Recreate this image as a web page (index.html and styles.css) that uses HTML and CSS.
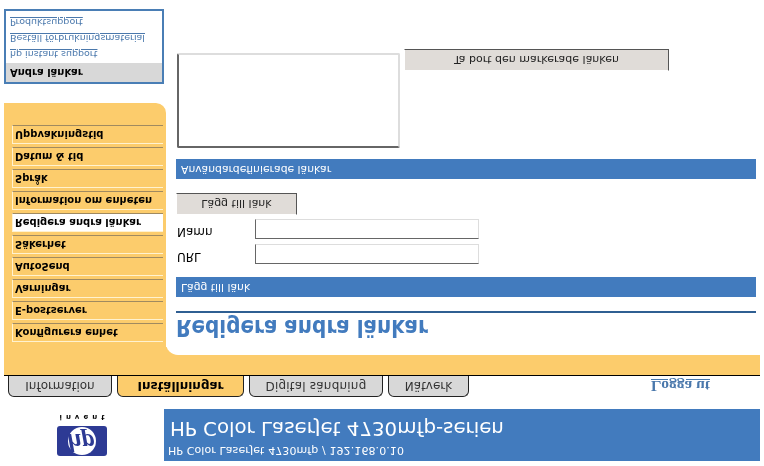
FILE: index.html
```html
<!DOCTYPE html>
<html>
<head>
    <title>Redigera andra länkar</title>
    <link rel="stylesheet" href="styles.css">
</head>
<body>
    <div class="page">
        <div class="top">
            <div class="logo">
                <svg width="50" height="30" viewBox="0 0 50 30">
                    <rect width="50" height="30" rx="3" fill="#2d3a94"/>
                    <circle cx="25" cy="15" r="14" fill="#fff"/>
                    <text x="24" y="22" text-anchor="middle" class="logo-hp">hp</text>
                </svg>
                <div class="invent">invent</div>
            </div>
            <div class="title">
                <div class="title-sub">HP Color LaserJet 4730mfp / 192.168.0.10</div>
                <div class="title-main">HP Color LaserJet 4730mfp-serien</div>
            </div>
        </div>
        <div class="tabs">
            <a class="tab tab-info">Information</a>
            <a class="tab tab-settings active">Inställningar</a>
            <a class="tab tab-digital">Digital sändning</a>
            <a class="tab tab-net">Nätverk</a>
            <a class="logout">Logga ut</a>
        </div>
        <div class="body">
            <div class="side">
                <div class="nav">
                    <a class="nav-item">Konfigurera enhet</a>
                    <a class="nav-item">E-postserver</a>
                    <a class="nav-item">Varningar</a>
                    <a class="nav-item">AutoSend</a>
                    <a class="nav-item">Säkerhet</a>
                    <a class="nav-item active">Redigera andra länkar</a>
                    <a class="nav-item">Information om enheten</a>
                    <a class="nav-item">Språk</a>
                    <a class="nav-item">Datum &amp; tid</a>
                    <a class="nav-item">Uppvakningstid</a>
                </div>
                <div class="links">
                    <div class="links-head">Andra länkar</div>
                    <a class="links-item">hp instant support</a>
                    <a class="links-item">Beställ förbrukningsmaterial</a>
                    <a class="links-item">Produktsupport</a>
                </div>
            </div>
            <div class="content">
                <h1><span>Redigera andra länkar</span></h1>
                <div class="bar">Lägg till länk</div>
                <div class="field"><label>URL</label><input type="text"></div>
                <div class="field"><label>Namn</label><input type="text"></div>
                <button class="btn btn-add">Lägg till länk</button>
                <div class="bar bar-user">Användardefinierade länkar</div>
                <div class="list-row">
                    <select class="list" size="5"></select>
                    <button class="btn btn-remove">Ta bort den markerade länken</button>
                </div>
            </div>
        </div>
    </div>
</body>
</html>
```

FILE: styles.css
```css
html, body {
    margin: 0;
    padding: 0;
    background: #fff;
}
body {
    font-family: "DejaVu Sans", Verdana, sans-serif;
    font-size: 11px;
    color: #000;
    overflow: hidden;
}
/* the whole screen is shown upside down */
.page {
    width: 764px;
    height: 466px;
    padding-top: 5px;
    box-sizing: border-box;
    overflow: hidden;
    transform: scaleY(-1);
}
.top {
    display: flex;
    height: 52px;
}
.logo {
    width: 164px;
    padding-top: 5px;
    display: flex;
    flex-direction: column;
    align-items: center;
}
.logo-hp {
    font-family: "Liberation Serif", serif;
    font-style: italic;
    font-weight: bold;
    font-size: 26px;
    fill: #2d3a94;
}
.invent {
    margin-top: 5px;
    padding-left: 4px;
    font-size: 7px;
    font-weight: bold;
    line-height: 9px;
    letter-spacing: 4px;
}
.title {
    width: 596px;
    background: #427bbe;
    color: #fff;
    padding: 3px 0 0 4px;
    box-sizing: border-box;
}
.title-sub {
    font-size: 11px;
    line-height: 16px;
    letter-spacing: 0.1px;
}
.title-main {
    margin-left: 2px;
    font-size: 19.8px;
    line-height: 28px;
}
.tabs {
    display: flex;
    align-items: flex-end;
    height: 21px;
    margin-top: 12px;
    padding-left: 8px;
    gap: 5px;
}
.tab {
    height: 21px;
    box-sizing: border-box;
    border: 1px solid #222;
    border-bottom: none;
    border-radius: 6px 6px 0 0;
    background: #d8d8d8;
    color: #333;
    text-align: center;
    font-size: 12px;
    line-height: 20px;
}
.tab.active {
    background: #fccc6c;
    color: #000;
    font-weight: bold;
}
.tab-info { width: 104px; }
.tab-settings { width: 127px; }
.tab-digital { width: 134px; letter-spacing: 0.2px; }
.tab-net { width: 81px; }
.logout {
    margin-left: 177px;
    align-self: center;
    color: #4a78ac;
    font-family: "Liberation Serif", serif;
    font-weight: bold;
    font-size: 15.5px;
    text-decoration: underline;
}
.body {
    display: flex;
    width: 756px;
    margin-left: 4px;
    border-top: 1px solid #000;
    background: linear-gradient(#fccc6c 28px, transparent 28px);
}
.side {
    width: 162px;
    flex: none;
}
.nav {
    height: 272px;
    box-sizing: border-box;
    padding: 33px 3px 0 8px;
    background: #fccc6c;
    border-bottom-right-radius: 10px;
    display: flex;
    flex-direction: column;
    gap: 3px;
}
.nav-item {
    height: 19px;
    box-sizing: border-box;
    padding-left: 2px;
    border-top: 1px solid #fff2d0;
    border-left: 1px solid #fff2d0;
    border-bottom: 1px solid #a08a60;
    font-size: 10px;
    font-weight: bold;
    line-height: 17px;
}
.nav-item.active {
    background: #fff;
}
.links {
    width: 160px;
    height: 75px;
    box-sizing: border-box;
    margin-top: 19px;
    border: 2px solid #4a7eb5;
}
.links-head {
    height: 19px;
    margin-bottom: 1px;
    padding-left: 4px;
    background: #d8d8d8;
    font-size: 10px;
    font-weight: bold;
    line-height: 19px;
}
.links-item {
    display: block;
    padding-left: 4px;
    color: #4a78ac;
    font-size: 9.5px;
    line-height: 16px;
    text-decoration: underline;
}
.content {
    flex: 1;
    margin-top: 20px;
    padding: 0 4px 0 10px;
    background: #fff;
    border-top-left-radius: 12px;
    height: 300px;
}
h1 {
    margin: 0;
    height: 44px;
    box-sizing: border-box;
    padding-top: 13px;
    border-bottom: 2px solid #2f5f92;
    color: #427bbe;
    font-size: 20px;
    line-height: 30px;
}
h1 span {
    display: inline-block;
    transform: scaleY(1.15);
    transform-origin: 0 22px;
}
.bar {
    height: 20px;
    margin-top: 14px;
    padding-left: 5px;
    background: #427bbe;
    color: #fff;
    font-size: 10.8px;
    line-height: 20px;
}
.field {
    display: flex;
    align-items: center;
    height: 20px;
    margin-top: 5px;
}
.bar + .field {
    margin-top: 13px;
}
.field label {
    width: 78px;
    margin-left: 1px;
    padding-bottom: 6px;
    font-size: 12px;
}
.field input {
    width: 224px;
    height: 20px;
    box-sizing: border-box;
    margin: 0;
    border: 1px solid;
    border-color: #666 #ddd #ddd #666;
    background: #fff;
}
.btn {
    display: block;
    height: 22px;
    padding: 0;
    border: 1px solid;
    border-color: #fff #555 #555 #fff;
    background: #e0dcd8;
    color: #222;
    font-family: "DejaVu Sans", Verdana, sans-serif;
    font-size: 11px;
}
.btn-add {
    width: 121px;
    margin-top: 4px;
}
.bar-user {
    margin-top: 14px;
}
.list-row {
    display: flex;
    align-items: flex-end;
    margin-top: 11px;
}
.list {
    width: 223px;
    height: 95px;
    box-sizing: border-box;
    margin: 0 0 4px 1px;
    border: 2px solid;
    border-color: #666 #ddd #ddd #666;
    background: #fff;
}
.btn-remove {
    width: 265px;
    margin-left: 4px;
}
```
